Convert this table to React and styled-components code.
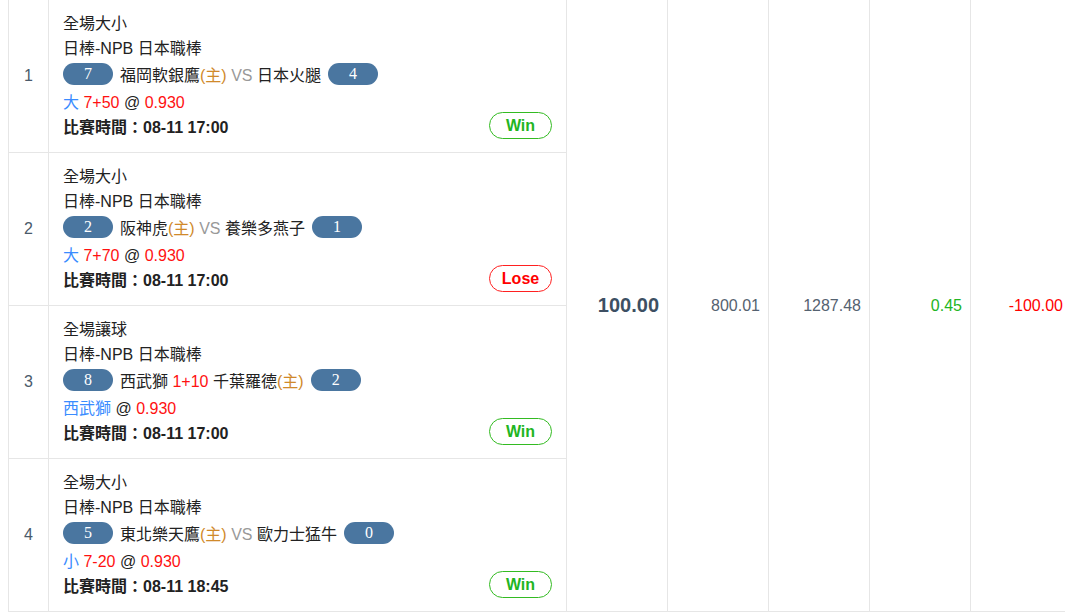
import React from 'react';
import styled, { createGlobalStyle } from 'styled-components';

const GlobalStyle = createGlobalStyle`
  body {
    margin: 0 8px;
    background: #ffffff;
    font-family: "Liberation Sans", Arial, "Noto Sans CJK TC", sans-serif;
  }
`;

const Table = styled.table`
  width: 1063px;
  border-collapse: collapse;
  table-layout: fixed;
  color: #222222;
  font-size: 16px;
`;

const Cell = styled.td`
  border: 1px solid #e6e6e6;
  border-top: ${p => (p.$first ? 'none' : '1px solid #e6e6e6')};
  padding: 0;
  vertical-align: middle;
`;

const IndexCell = styled(Cell)`
  text-align: center;
  color: #4a5a6a;
`;

const DetailCell = styled(Cell)`
  height: 152px;
  padding: 11px 14px 13px 14px;
  box-sizing: border-box;
`;

const NumCell = styled(Cell)`
  text-align: right;
  padding-right: 8px;
  color: ${p => p.$color || '#556270'};
  font-size: ${p => (p.$big ? '20px' : '16px')};
  font-weight: ${p => (p.$big ? 'bold' : 'normal')};
`;

const Line = styled.div`
  height: 25px;
  line-height: 25px;
  white-space: nowrap;
`;

const BetLine = styled(Line)`
  line-height: 31px;
`;

const TeamLine = styled.div`
  height: 26px;
  display: flex;
  align-items: center;
  white-space: nowrap;
`;

const Badge = styled.span`
  display: inline-block;
  width: 50px;
  height: 22px;
  line-height: 22px;
  border-radius: 11px;
  background: #4a76a0;
  color: #ffffff;
  text-align: center;
  font-family: "Liberation Serif", "Times New Roman", serif;
  font-size: 16px;
  margin: ${p => (p.$right ? '0 0 0 7px' : '0 7px 0 0')};
`;

const Home = styled.span`
  color: #d0892a;
`;

const Vs = styled.span`
  color: #999999;
`;

const Blue = styled.span`
  color: #3a8cff;
`;

const Red = styled.span`
  color: #ff1111;
`;

const TimeLine = styled.div`
  height: 27px;
  display: flex;
  align-items: center;
  justify-content: space-between;
  font-weight: bold;
  white-space: nowrap;
`;

const Result = styled.span`
  display: inline-flex;
  align-items: center;
  justify-content: center;
  width: 61px;
  height: 25px;
  border: 1px solid ${p => (p.$lose ? '#ff2020' : '#33bb22')};
  border-radius: 14px;
  color: ${p => (p.$lose ? '#ff0000' : '#22b522')};
  font-weight: bold;
  font-size: 16px;
`;

const rows = [
  {
    type: '全場大小',
    home: 7,
    away: 4,
    teams: (
      <span>
        福岡軟銀鷹<Home>(主)</Home> <Vs>VS</Vs> 日本火腿
      </span>
    ),
    pick: '大',
    line: '7+50',
    time: '08-11 17:00',
    result: 'Win',
  },
  {
    type: '全場大小',
    home: 2,
    away: 1,
    teams: (
      <span>
        阪神虎<Home>(主)</Home> <Vs>VS</Vs> 養樂多燕子
      </span>
    ),
    pick: '大',
    line: '7+70',
    time: '08-11 17:00',
    result: 'Lose',
  },
  {
    type: '全場讓球',
    home: 8,
    away: 2,
    teams: (
      <span>
        西武獅 <Red>1+10</Red> 千葉羅德<Home>(主)</Home>
      </span>
    ),
    pick: '西武獅',
    line: null,
    time: '08-11 17:00',
    result: 'Win',
  },
  {
    type: '全場大小',
    home: 5,
    away: 0,
    teams: (
      <span>
        東北樂天鷹<Home>(主)</Home> <Vs>VS</Vs> 歐力士猛牛
      </span>
    ),
    pick: '小',
    line: '7-20',
    time: '08-11 18:45',
    result: 'Win',
  },
];

const App = () => {
  return (
    <>
      <GlobalStyle />
      <Table>
        <colgroup>
          <col style={{ width: 40 }} />
          <col style={{ width: 518 }} />
          <col style={{ width: 101 }} />
          <col style={{ width: 101 }} />
          <col style={{ width: 101 }} />
          <col style={{ width: 101 }} />
          <col style={{ width: 101 }} />
        </colgroup>
        <tbody>
          {rows.map((r, i) => (
            <tr key={i}>
              <IndexCell $first={i === 0}>{i + 1}</IndexCell>
              <DetailCell $first={i === 0}>
                <Line>{r.type}</Line>
                <Line>日棒-NPB 日本職棒</Line>
                <TeamLine>
                  <Badge>{r.home}</Badge>
                  {r.teams}
                  <Badge $right>{r.away}</Badge>
                </TeamLine>
                <BetLine>
                  <Blue>{r.pick}</Blue>
                  {r.line && <Red> {r.line}</Red>} @ <Red>0.930</Red>
                </BetLine>
                <TimeLine>
                  <span>比賽時間：{r.time}</span>
                  <Result $lose={r.result === 'Lose'}>{r.result}</Result>
                </TimeLine>
              </DetailCell>
              {i === 0 && (
                <>
                  <NumCell $first rowSpan={4} $big $color="#3d4f63">100.00</NumCell>
                  <NumCell $first rowSpan={4}>800.01</NumCell>
                  <NumCell $first rowSpan={4}>1287.48</NumCell>
                  <NumCell $first rowSpan={4} $color="#22b522">0.45</NumCell>
                  <NumCell $first rowSpan={4} $color="#ff0000">-100.00</NumCell>
                </>
              )}
            </tr>
          ))}
        </tbody>
      </Table>
    </>
  );
};

export default App;
